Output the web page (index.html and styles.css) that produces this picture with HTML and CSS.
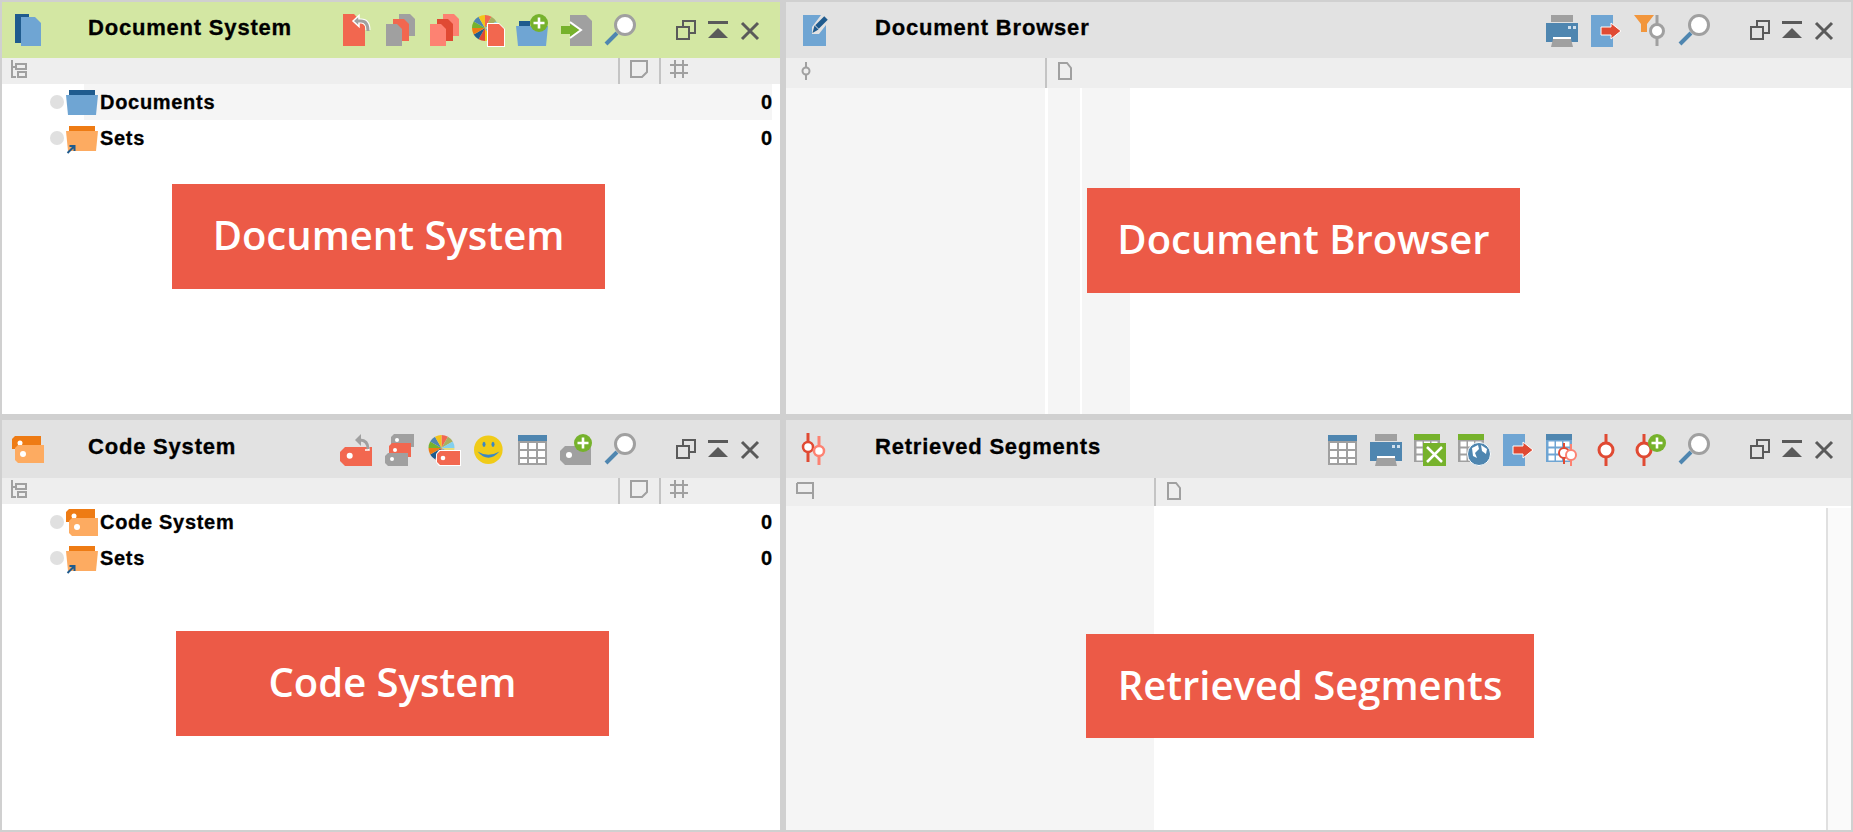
FILE: index.html
```html
<!DOCTYPE html>
<html lang="en">
<head>
<meta charset="utf-8">
<title>Workspace</title>
<link rel="stylesheet" href="styles.css">
</head>
<body>
<svg class="defs" aria-hidden="true">
  <defs>
    <g id="plus"><circle r="9" fill="#76b22c"/><path d="M0-5.5V5.5M-5.5 0H5.5" stroke="#fff" stroke-width="2.6" fill="none"/></g>
    <g id="i-search"><path d="M2 30 13 19" stroke="#4f86b0" stroke-width="4" fill="none"/><circle cx="21" cy="11" r="9.5" fill="#fff" stroke="#a0a0a0" stroke-width="3"/></g>
    <g id="pie">
      <path d="M13 14V1A13 13 0 0 1 19.5 2.700Z" fill="#f2674f"/>
      <path d="M13 14 19.500 2.700A13 13 0 0 1 24.300 7.500Z" fill="#a8b060"/>
      <path d="M13 14 24.300 7.500A13 13 0 0 1 26 14Z" fill="#82d0ee"/>
      <path d="M13 14H26A13 13 0 0 1 24.300 20.500Z" fill="#e8dc7a"/>
      <path d="M13 14 19.500 25.300A13 13 0 0 1 13 27Z" fill="#f3c41a"/>
      <path d="M13 14V27A13 13 0 0 1 6.500 25.300Z" fill="#e04a33"/>
      <path d="M13 14 6.500 25.300A13 13 0 0 1 1.700 20.500Z" fill="#1f5b8e"/>
      <path d="M13 14 1.700 20.500A13 13 0 0 1 0 14Z" fill="#ee7b14"/>
      <path d="M13 14H0A13 13 0 0 1 1.700 7.500Z" fill="#76b22c"/>
      <path d="M13 14 1.700 7.500A13 13 0 0 1 6.500 2.700Z" fill="#4f86b0"/>
      <path d="M13 14 6.500 2.700A13 13 0 0 1 13 1Z" fill="#f3c41a"/>
      <path d="M13 14 24.300 20.500A13 13 0 0 1 19.500 25.300Z" fill="#6fa5d3"/>
    </g>
    <g id="i-printer">
      <path d="M5 1H27V8H5Z" fill="#a0a0a0"/>
      <path d="M0 9H32V28H0Z" fill="#4f86b0"/>
      <path d="M22 12h3v3h-3ZM27 12h3v3h-3Z" fill="#cfe0ee"/>
      <path d="M7 23H25V25H7Z" fill="#fff"/>
      <path d="M7 25H25L27 33H5Z" fill="#a0a0a0"/>
    </g>
    <g id="i-export">
      <path d="M1 1H23V33H1Z" fill="#6fa5d3"/>
      <path d="M11 13H21V9L31 17 21 25V21H11Z" fill="#e04a33" stroke="#fff" stroke-width="1"/>
    </g>
    <g id="i-table">
      <path d="M2 2H31V32H2Z" fill="#a0a0a0"/>
      <path d="M2 2H31V8H2Z" fill="#4f86b0"/>
      <path d="M4 10h7v6H4ZM13 10h7v6h-7ZM22 10h7v6h-7ZM4 18h7v6H4ZM13 18h7v6h-7ZM22 18h7v6h-7ZM4 26h7v4H4ZM13 26h7v4h-7ZM22 26h7v4h-7Z" fill="#fff"/>
    </g>
    <g id="small-cells"><path d="M2.500 8.500h6v5h-6ZM10 8.500h6v5h-6ZM17.500 8.500h6v5h-6ZM2.500 15.500h6v5h-6ZM10 15.500h6v5h-6ZM17.500 15.500h6v5h-6ZM2.500 22.500h6v5h-6ZM10 22.500h6v5h-6ZM17.500 22.500h6v5h-6Z" fill="#fff"/></g>
    <g id="i-restore"><path d="M1 7H13V19H1ZM7 7V1H19V13H13" transform="translate(6 6)" fill="none" stroke="#5a5a5a" stroke-width="2"/></g>
    <g id="i-collapse"><path d="M6 7H26V10H6Z" fill="#5a5a5a"/><path d="M16 14 26 24H6Z" fill="#5a5a5a"/></g>
    <g id="i-close"><path d="M8 9 24 25M24 9 8 25" stroke="#5a5a5a" stroke-width="3" fill="none"/></g>
    <g id="i-tags">
      <path d="M3 3H29V16H0V6Z" fill="#ee7b14"/>
      <circle cx="8" cy="10" r="2.500" fill="#fff"/>
      <path d="M6 12H32V30H6L3 27V15Z" fill="#fdab61"/>
      <circle cx="11" cy="21" r="3" fill="#fff"/>
    </g>
    <g id="i-folder-blue"><path d="M3 4H29V9H3Z" fill="#1f5b8e"/><path d="M0 9H32L30 29H2Z" fill="#6fa5d3"/></g>
    <g id="i-folder-set">
      <path d="M3 4H29V9H3Z" fill="#ee7b14"/><path d="M0 9H32L30 29H2Z" fill="#fdab61"/>
      <path d="M1.500 31 8 24.500M3.500 24H8.500V29" fill="none" stroke="#1f5b8e" stroke-width="2"/>
    </g>
    <g id="i-pin"><path d="M6 0V18" stroke="#a0a0a0" stroke-width="2"/><circle cx="6" cy="9" r="3.500" fill="#eee" stroke="#a0a0a0" stroke-width="2"/></g>
    <g id="i-note"><path d="M1 1H17V12L12 17H1Z" fill="none" stroke="#a0a0a0" stroke-width="2"/></g>
    <g id="i-hash"><path d="M5 0V18M13 0V18M0 5H18M0 13H18" fill="none" stroke="#a0a0a0" stroke-width="2"/></g>
    <g id="i-tree"><path d="M1 0V17H5M1 7H5M5 4H15V9H5ZM7 12H15V17H7Z" fill="none" stroke="#a0a0a0" stroke-width="2"/></g>
    <g id="i-page"><path d="M1 1H9L13 6V17H1Z" fill="none" stroke="#a0a0a0" stroke-width="2"/></g>
    <g id="i-flag"><path d="M1 1H17V17M17 11H1V1" fill="none" stroke="#a0a0a0" stroke-width="2"/></g>
  </defs>
</svg>

<main class="app">

  <section class="panel">
    <header class="hd hd-top hd-active">
      <svg class="ttl-ic" viewBox="0 0 32 32"><path d="M3 0H17V29H3Z" fill="#1f5b8e"/><path d="M9 3H23L29 9V32H9Z" fill="#6fa5d3"/></svg>
      <h2 class="ttl">Document System</h2>
      <div class="tools">
        <svg class="ic" viewBox="0 -1 44 34"><path d="M3 0H14L25 12V32H3Z" fill="#f2674f"/><path d="M15 7H21Q28 7 28 16" fill="none" stroke="#fff" stroke-width="5"/><path d="M13 7 19 1.500V12.500Z" fill="#a0a0a0" stroke="#fff" stroke-width="1.500"/><path d="M18 7H21Q28 7 28 17" fill="none" stroke="#a0a0a0" stroke-width="3"/></svg>
        <svg class="ic" viewBox="0 -1 44 34"><path d="M15 0H26L31 5V22H15Z" fill="#a0a0a0"/><path d="M9 5H20L25 10V27H9Z" fill="#f2674f"/><path d="M2 10H13L18 15V32H2Z" fill="#a0a0a0"/></svg>
        <svg class="ic" viewBox="0 -1 44 34"><path d="M15 0H26L31 5V22H15Z" fill="#fd8272"/><path d="M9 5H20L25 10V27H9Z" fill="#e04a33"/><path d="M2 10H13L18 15V32H2Z" fill="#fd8272"/></svg>
        <svg class="ic" viewBox="0 -1 44 34"><use href="#pie"/><path d="M15 9H27L33 15V33H15Z" fill="#fff"/><path d="M16 10H27L32 15V32H16Z" fill="#f2674f"/></svg>
        <svg class="ic" viewBox="0 -1 44 34"><path d="M3 7H14V12H3Z" fill="#1f5b8e"/><path d="M0 12H32L30 32H2Z" fill="#6fa5d3"/><use href="#plus" x="23" y="9"/></svg>
        <svg class="ic" viewBox="0 -1 44 34"><path d="M10 1H26L32 7V32H10Z" fill="#a0a0a0"/><path d="M1 12H10V10L20 16 10 23V20H1Z" fill="#76b22c"/><path d="M10 8 21 16 10 24" fill="none" stroke="#fff" stroke-width="2"/></svg>
        <svg class="ic" viewBox="0 -1 44 34"><use href="#i-search"/></svg>
      </div>
      <div class="win">
        <svg class="wb" viewBox="0 0 32 32"><use href="#i-restore"/></svg>
        <svg class="wb" viewBox="0 0 32 32"><use href="#i-collapse"/></svg>
        <svg class="wb" viewBox="0 0 32 32"><use href="#i-close"/></svg>
      </div>
    </header>
    <div class="cols cols-26">
      <div class="col col-grow"><svg class="cic" viewBox="0 0 16 18"><use href="#i-tree"/></svg></div>
      <div class="col col-note"><svg class="cic" viewBox="0 0 18 18"><use href="#i-note"/></svg></div>
      <div class="col col-num"><svg class="cic" viewBox="0 0 18 18"><use href="#i-hash"/></svg></div>
    </div>
    <div class="rows">
      <div class="row row-on"><span class="dot"></span><svg class="ric" viewBox="0 0 32 32"><use href="#i-folder-blue"/></svg><span class="lbl">Documents</span><span class="cnt">0</span></div>
      <div class="row"><span class="dot"></span><svg class="ric" viewBox="0 0 32 32"><use href="#i-folder-set"/></svg><span class="lbl">Sets</span><span class="cnt">0</span></div>
    </div>
    <div class="banner b-ds">Document System</div>
  </section>

  <section class="panel panel-r">
    <header class="hd hd-top">
      <svg class="ttl-ic" viewBox="0 0 32 32"><path d="M4 1H22L13 13V20H20L27 11V32H4Z" fill="#6fa5d3"/><path d="M27 4 18 13" stroke="#1f5b8e" stroke-width="5"/><path d="M15.500 11.500 19.500 15.500 13.500 19Z" fill="#1f5b8e"/></svg>
      <h2 class="ttl">Document Browser</h2>
      <div class="tools">
        <svg class="ic" viewBox="0 -1 44 34"><use href="#i-printer"/></svg>
        <svg class="ic" viewBox="0 -1 44 34"><use href="#i-export"/></svg>
        <svg class="ic" viewBox="0 -1 44 34"><path d="M0 1H20L13 10V18H7V10Z" fill="#f2963c"/><path d="M23 1V32" stroke="#a0a0a0" stroke-width="3"/><circle cx="23" cy="17" r="6.500" fill="#fff" stroke="#a0a0a0" stroke-width="3"/></svg>
        <svg class="ic" viewBox="0 -1 44 34"><use href="#i-search"/></svg>
      </div>
      <div class="win">
        <svg class="wb" viewBox="0 0 32 32"><use href="#i-restore"/></svg>
        <svg class="wb" viewBox="0 0 32 32"><use href="#i-collapse"/></svg>
        <svg class="wb" viewBox="0 0 32 32"><use href="#i-close"/></svg>
      </div>
    </header>
    <div class="cols cols-30">
      <div class="col col-w259"><svg class="cic cic-pin" viewBox="0 0 12 18"><use href="#i-pin"/></svg></div>
      <div class="col col-rest"><svg class="cic cic-page" viewBox="0 0 15 18"><use href="#i-page"/></svg></div>
    </div>
    <div class="body-cols">
      <div class="fill w259"></div>
      <div class="fill w32"></div>
      <div class="fill w48"></div>
    </div>
    <div class="banner b-db">Document Browser</div>
  </section>

  <section class="panel">
    <header class="hd">
      <svg class="ttl-ic" viewBox="0 0 32 32"><use href="#i-tags"/></svg>
      <h2 class="ttl">Code System</h2>
      <div class="tools">
        <svg class="ic" viewBox="0 -1 44 34"><path d="M0 19 5 14H32V33H5L0 28Z" fill="#f2674f"/><circle cx="9.700" cy="22.700" r="3" fill="#fff"/><path d="M20 7Q29 7 29 17H25" fill="none" stroke="#fff" stroke-width="1.500"/><path d="M15 7 21 1V13Z" fill="#a0a0a0"/><path d="M20 7Q28 7 28 16" fill="none" stroke="#a0a0a0" stroke-width="3"/></svg>
        <svg class="ic" viewBox="0 -1 44 34"><path d="M10 1H30V14H7V4Z" fill="#a0a0a0"/><circle cx="13" cy="7" r="2" fill="#fff"/><path d="M8 10H27V24H5V13Z" fill="#f2674f"/><circle cx="11" cy="17" r="2" fill="#fff"/><path d="M4 20H24V33H4L1 30V23Z" fill="#a0a0a0"/><circle cx="8" cy="26" r="2" fill="#fff"/></svg>
        <svg class="ic" viewBox="0 -1 44 34"><use href="#pie" x="0.500" y="1"/><path d="M11 17H33V33H11L8 29V21Z" fill="#fff"/><path d="M12 18H32V32H12L9 29V21Z" fill="#f2674f"/><circle cx="15" cy="25" r="2.300" fill="#fff"/></svg>
        <svg class="ic" viewBox="0 -1 44 34"><circle cx="16.300" cy="16.700" r="14.300" fill="#f0cb18"/><ellipse cx="12" cy="11.300" rx="1.500" ry="2.600" fill="#3c87c3"/><ellipse cx="21" cy="11.300" rx="1.500" ry="2.600" fill="#3c87c3"/><path d="M5.500 18.500Q16.300 31 27.500 18.500Q16.300 25 5.500 18.500Z" fill="#3c87c3"/></svg>
        <svg class="ic" viewBox="0 -1 44 34"><use href="#i-table"/></svg>
        <svg class="ic" viewBox="0 -1 44 34"><path d="M0 18 5 13H31V32H5L0 27Z" fill="#a0a0a0"/><circle cx="9" cy="22" r="3" fill="#fff"/><use href="#plus" x="23" y="10"/></svg>
        <svg class="ic" viewBox="0 -1 44 34"><use href="#i-search"/></svg>
      </div>
      <div class="win">
        <svg class="wb" viewBox="0 0 32 32"><use href="#i-restore"/></svg>
        <svg class="wb" viewBox="0 0 32 32"><use href="#i-collapse"/></svg>
        <svg class="wb" viewBox="0 0 32 32"><use href="#i-close"/></svg>
      </div>
    </header>
    <div class="cols cols-26">
      <div class="col col-grow"><svg class="cic" viewBox="0 0 16 18"><use href="#i-tree"/></svg></div>
      <div class="col col-note"><svg class="cic" viewBox="0 0 18 18"><use href="#i-note"/></svg></div>
      <div class="col col-num"><svg class="cic" viewBox="0 0 18 18"><use href="#i-hash"/></svg></div>
    </div>
    <div class="rows">
      <div class="row"><span class="dot"></span><svg class="ric" viewBox="0 0 32 32"><use href="#i-tags"/></svg><span class="lbl">Code System</span><span class="cnt">0</span></div>
      <div class="row"><span class="dot"></span><svg class="ric" viewBox="0 0 32 32"><use href="#i-folder-set"/></svg><span class="lbl">Sets</span><span class="cnt">0</span></div>
    </div>
    <div class="banner b-cs">Code System</div>
  </section>

  <section class="panel panel-r">
    <header class="hd">
      <svg class="ttl-ic" viewBox="0 0 32 32"><path d="M9 0V29" stroke="#e04a33" stroke-width="3"/><circle cx="9" cy="14" r="5" fill="#fff" stroke="#e04a33" stroke-width="2.500"/><path d="M20 3V32" stroke="#fd8272" stroke-width="3"/><circle cx="20" cy="18" r="5" fill="#fff" stroke="#fd8272" stroke-width="2.500"/></svg>
      <h2 class="ttl">Retrieved Segments</h2>
      <div class="tools">
        <svg class="ic" viewBox="0 -1 44 34"><use href="#i-table"/></svg>
        <svg class="ic" viewBox="0 -1 44 34"><use href="#i-printer"/></svg>
        <svg class="ic" viewBox="0 -1 44 34"><path d="M0 1H26V29H0Z" fill="#a0a0a0"/><path d="M0 1H26V7H0Z" fill="#76b22c"/><use href="#small-cells"/><path d="M9 10H32V33H9Z" fill="#76b22c"/><path d="M13 14 28 29M28 14 13 29" stroke="#fff" stroke-width="2.500"/></svg>
        <svg class="ic" viewBox="0 -1 44 34"><path d="M0 1H26V29H0Z" fill="#a0a0a0"/><path d="M0 1H26V7H0Z" fill="#76b22c"/><use href="#small-cells"/><circle cx="21" cy="21" r="11.500" fill="#4f86b0" stroke="#fff" stroke-width="1"/><path d="M14 15 20 12 21 16 17 20 19 25 15 23ZM23 12 29 16 28 21 24 18Z" fill="#fff"/></svg>
        <svg class="ic" viewBox="0 -1 44 34"><use href="#i-export"/></svg>
        <svg class="ic" viewBox="0 -1 44 34"><path d="M0 1H26V29H0Z" fill="#6fa5d3"/><path d="M0 1H26V7H0Z" fill="#4f86b0"/><use href="#small-cells"/><path d="M18 10V31" stroke="#e04a33" stroke-width="2"/><circle cx="18" cy="20" r="5" fill="#fff" stroke="#e04a33" stroke-width="2"/><path d="M25 11V33" stroke="#fd8272" stroke-width="2"/><circle cx="25" cy="22" r="5" fill="#fff" stroke="#fd8272" stroke-width="2"/></svg>
        <svg class="ic" viewBox="0 -1 44 34"><path d="M16 1V33" stroke="#e04a33" stroke-width="3"/><circle cx="16" cy="17" r="7" fill="#fff" stroke="#e04a33" stroke-width="3"/></svg>
        <svg class="ic" viewBox="0 -1 44 34"><path d="M10 1V33" stroke="#e04a33" stroke-width="3"/><circle cx="10" cy="17" r="7" fill="#fff" stroke="#e04a33" stroke-width="3"/><use href="#plus" x="23" y="10"/></svg>
        <svg class="ic" viewBox="0 -1 44 34"><use href="#i-search"/></svg>
      </div>
      <div class="win">
        <svg class="wb" viewBox="0 0 32 32"><use href="#i-restore"/></svg>
        <svg class="wb" viewBox="0 0 32 32"><use href="#i-collapse"/></svg>
        <svg class="wb" viewBox="0 0 32 32"><use href="#i-close"/></svg>
      </div>
    </header>
    <div class="cols cols-28">
      <div class="col col-w368"><svg class="cic cic-flag" viewBox="0 0 18 18"><use href="#i-flag"/></svg></div>
      <div class="col col-rest"><svg class="cic cic-page" viewBox="0 0 15 18"><use href="#i-page"/></svg></div>
    </div>
    <div class="body-cols">
      <div class="fill w368"></div>
      <div class="grow"></div>
      <div class="strip"></div>
    </div>
    <div class="banner b-rs">Retrieved Segments</div>
  </section>

</main>
</body>
</html>
```
FILE: styles.css
```css
html, body { margin: 0; padding: 0; }
body { width: 1853px; height: 832px; overflow: hidden; background: #d0d0d0; font-family: "Liberation Sans", Arial, sans-serif; }
.defs { position: absolute; width: 0; height: 0; }
.app {
  box-sizing: border-box;
  width: 1853px; height: 832px; padding: 2px;
  display: grid;
  grid-template-columns: 778px 1065px;
  grid-template-rows: 412px 410px;
  gap: 6px;
  background: #d0d0d0;
}
.panel { position: relative; background: #fff; display: flex; flex-direction: column; overflow: hidden; }

.hd { flex: none; height: 58px; display: flex; align-items: center; padding-left: 10px; background: #e2e2e2; }
.hd-top { height: 56px; }
.hd-active { background: #d3e7a3; }
.panel-r .hd { padding-left: 13px; }
.ttl-ic { flex: none; width: 32px; height: 32px; overflow: visible; }
.ttl { margin: 0 0 4px 44px; font-size: 22px; line-height: 26px; font-weight: 700; letter-spacing: 0.8px; color: #000; white-space: nowrap; -webkit-text-stroke: 0.3px #000; }

.tools { margin-left: auto; display: flex; margin-right: 22px; }
.ic { flex: none; width: 44px; height: 34px; overflow: visible; }
.win { display: flex; padding-right: 14px; }
.panel-r .win { padding-right: 11px; }
.wb { flex: none; width: 32px; height: 32px; }

.cols { flex: none; display: flex; background: #eee; }
.cols-26 { height: 26px; }
.cols-28 { height: 28px; }
.cols-30 { height: 30px; }
.col { box-sizing: border-box; display: flex; align-items: flex-start; padding-left: 9px; padding-top: 2px; }
.col-grow { flex: 1; }
.col-note { flex: none; width: 41px; padding-left: 10px; border-left: 2px solid #c4c4c4; }
.col-num { flex: none; width: 121px; border-left: 2px solid #c4c4c4; }
.col-w259 { flex: none; width: 259px; padding-left: 14px; padding-top: 4px; }
.col-w368 { flex: none; width: 368px; padding-left: 10px; padding-top: 4px; }
.col-rest { flex: 1; border-left: 2px solid #c4c4c4; padding-left: 11px; padding-top: 4px; }
.cic { flex: none; width: 18px; height: 18px; }
.col-grow .cic { width: 16px; }
.cic-pin { width: 12px; }
.cic-page { width: 15px; }

.rows { flex: 1; }
.row {
  height: 36px; box-sizing: border-box; padding: 0 8px 0 48px;
  display: flex; align-items: center;
  font-size: 20px; font-weight: 700; letter-spacing: 0.7px; color: #000;
  -webkit-text-stroke: 0.3px #000;
}
.row-on { background: linear-gradient(to right, #fff 82px, #f5f5f5 82px, #f5f5f5 770px, #fff 770px); }
.dot { flex: none; width: 14px; height: 14px; border-radius: 50%; background: #e0e0e0; }
.ric { flex: none; width: 32px; height: 32px; margin-left: 2px; margin-right: 2px; }
.lbl { flex: 1; padding-top: 1px; }
.cnt { letter-spacing: 0; padding-top: 1px; }

.body-cols { flex: 1; display: flex; }
.fill { flex: none; background: #f5f5f5; }
.w259 { width: 259px; }
.w32 { width: 32px; margin-left: 3px; }
.w48 { width: 48px; margin-left: 2px; }
.w368 { width: 368px; }
.grow { flex: 1; }
.strip { flex: none; box-sizing: border-box; width: 25px; margin-top: 2px; background: #fafafa; border-left: 2px solid #e0e0e0; }

.banner {
  position: absolute;
  box-sizing: border-box;
  display: flex; align-items: center; justify-content: center;
  width: 433px; height: 105px; padding-bottom: 4px;
  background: #ec5a47; color: #fff;
  font-family: "Open Sans", sans-serif; font-weight: 600; font-size: 40px;
}
.b-ds { left: 170px; top: 182px; }
.b-db { left: 301px; top: 186px; }
.b-cs { left: 174px; top: 211px; }
.b-rs { left: 300px; top: 214px; width: 448px; height: 104px; }
```
